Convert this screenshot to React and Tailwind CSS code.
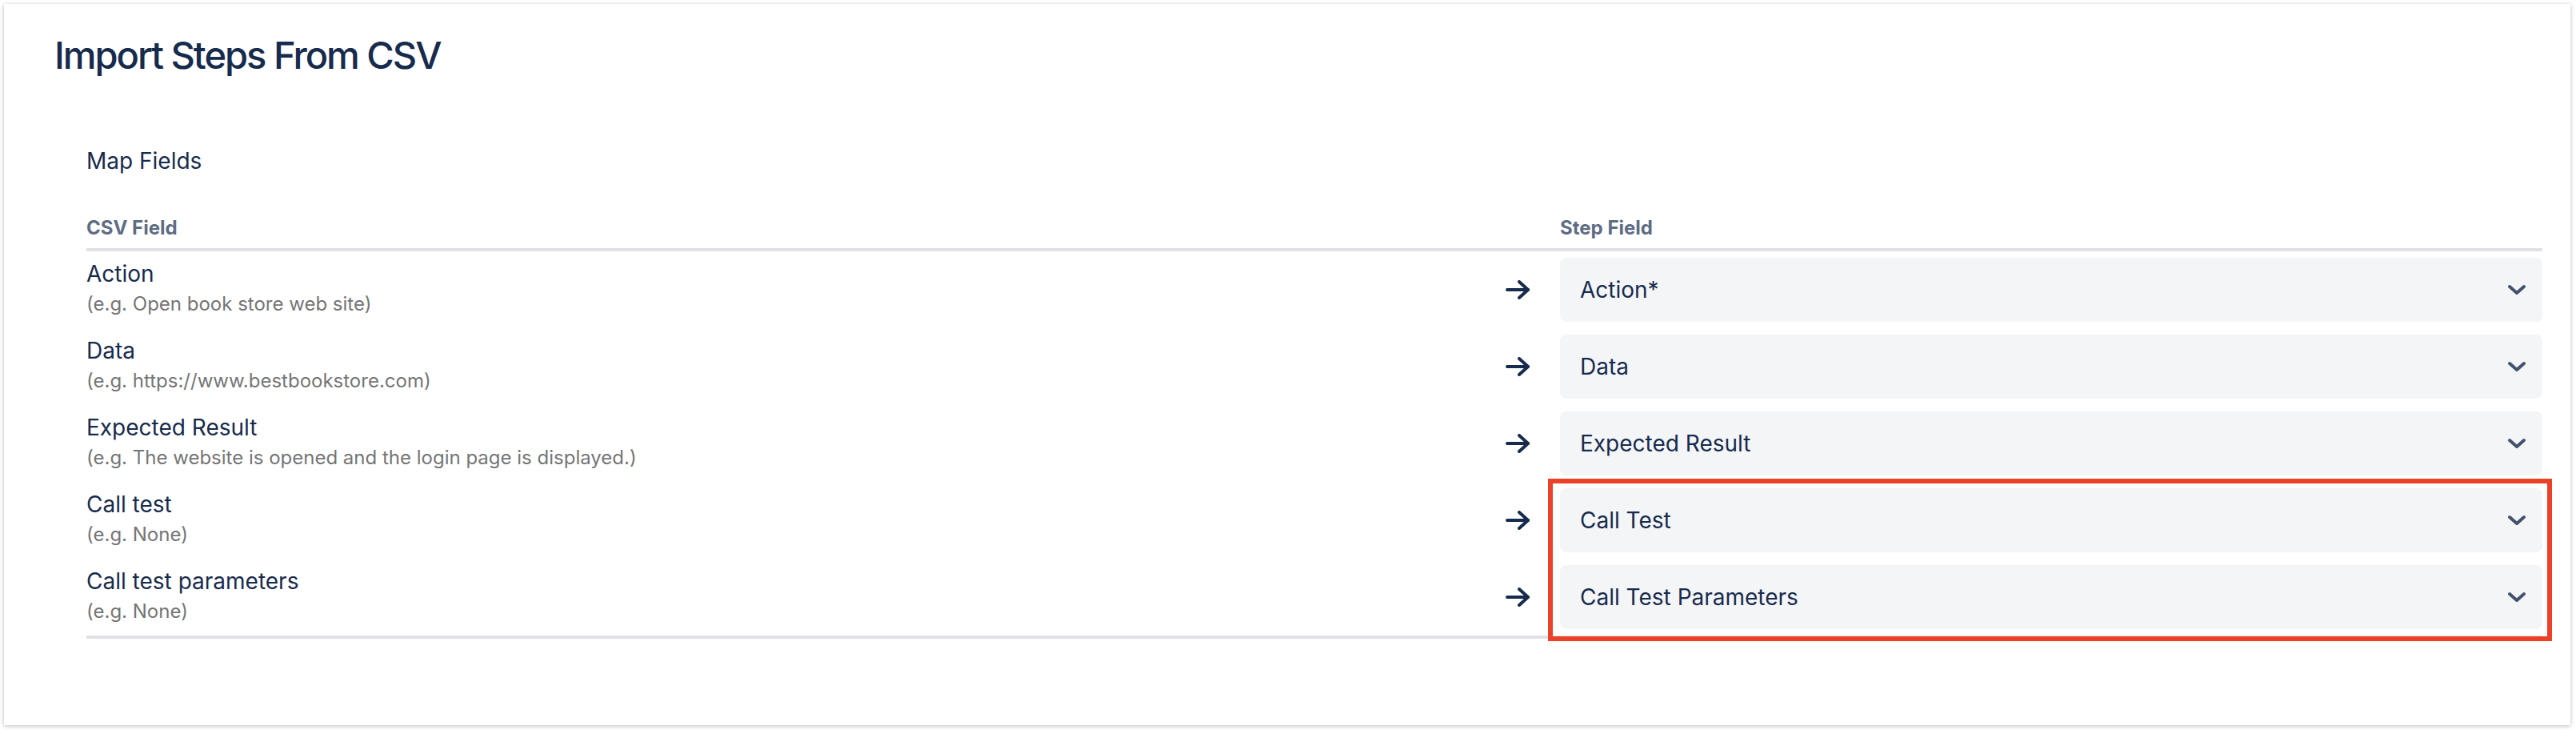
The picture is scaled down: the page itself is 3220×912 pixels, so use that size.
import React from 'react'

const rows = [
    { csv: 'Action', hint: '(e.g. Open book store web site)', step: 'Action*' },
    { csv: 'Data', hint: '(e.g. https://www.bestbookstore.com)', step: 'Data' },
    { csv: 'Expected Result', hint: '(e.g. The website is opened and the login page is displayed.)', step: 'Expected Result' },
    { csv: 'Call test', hint: '(e.g. None)', step: 'Call Test' },
    { csv: 'Call test parameters', hint: '(e.g. None)', step: 'Call Test Parameters' },
]

const ArrowRight = () => (
    <svg width="30" height="24" viewBox="0 0 30 24" fill="none" stroke="#172b4d" strokeWidth="4" strokeLinecap="round" strokeLinejoin="round">
        <path d="M2 12 H28" />
        <path d="M17 2 L28 12 L17 22" />
    </svg>
)

const Chevron = () => (
    <svg width="24" height="14" viewBox="0 0 24 14" fill="none" stroke="#42526e" strokeWidth="4" strokeLinecap="round" strokeLinejoin="round">
        <path d="M3 3 L12 11 L21 3" />
    </svg>
)

const MapRow = ({ row }) => (
    <div className='flex items-start py-[8px]'>
        <div className='flex-1 flex flex-col'>
            <span className='text-[28px] leading-[40px] text-[#172b4d]'>{row.csv}</span>
            <span className='text-[24px] leading-[36px] text-[#757575]'>{row.hint}</span>
        </div>
        <div className='h-[80px] flex items-center mr-[38px]'>
            <ArrowRight />
        </div>
        <button
            type="button"
            className='w-[1228px] h-[80px] bg-[#f4f5f7] rounded-[8px] pl-[25px] pr-[20px] flex items-center justify-between text-left'
        >
            <span className='text-[28px] text-[#172b4d]'>{row.step}</span>
            <Chevron />
        </button>
    </div>
)

const App = () => {
    return (
        <div className='w-[3220px] h-[912px] bg-white pt-[5px] pl-[5px]' style={{ fontFamily: 'Inter, "Liberation Sans", sans-serif' }}>
            <div className='relative w-[3208px] h-[901px] bg-white shadow-[0_1px_5px_rgba(0,0,0,0.28)] pt-[36px] pl-[63px] pr-[35px]'>
                <h1 className='text-[47px] leading-[56px] font-medium tracking-[-2px] text-[#172b4d]'>Import Steps From CSV</h1>

                <div className='ml-[40px]'>
                    <p className='mt-[84px] text-[28px] leading-[40px] text-[#172b4d]'>Map Fields</p>

                    <div className='mt-[48px] flex items-end pb-[9px] border-b-4 border-[#dfe1e6]'>
                        <span className='flex-1 text-[24px] leading-[32px] font-bold text-[#5e6c84]'>CSV Field</span>
                        <span className='w-[1228px] text-[24px] leading-[32px] font-bold text-[#5e6c84]'>Step Field</span>
                    </div>

                    <div className='border-b-4 border-[#dfe1e6]'>
                        {rows.map((row) => (
                            <MapRow key={row.csv} row={row} />
                        ))}
                    </div>
                </div>

                {/* highlight around the two new fields */}
                <div className='absolute left-[1930px] top-[593px] w-[1255px] h-[203px] border-[6px] border-[#ec4129] pointer-events-none' />
            </div>
        </div>
    )
}

export default App
